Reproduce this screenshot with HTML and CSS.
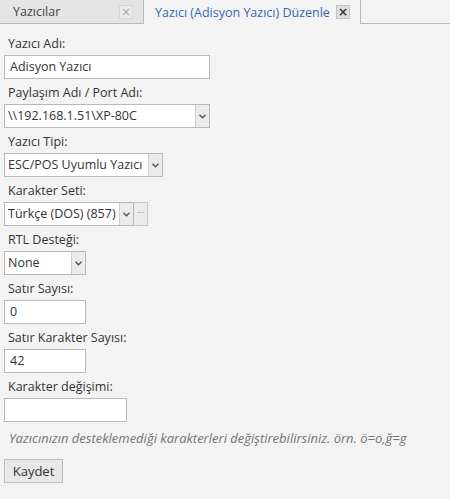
FILE: index.html
```html
<!DOCTYPE html>
<html lang="tr">
<head>
<meta charset="utf-8">
<link rel="stylesheet" href="styles.css">
</head>
<body>
<div class="tabs">
  <div class="tab">
    <span class="tab-title">Yazıcılar</span>
    <span class="close close-inactive">×</span>
  </div>
  <div class="tab active">
    <span class="tab-title">Yazıcı (Adisyon Yazıcı) Düzenle</span>
    <span class="close close-active">×</span>
  </div>
  <div class="tab-rest"></div>
</div>
<form class="form">
  <div class="field">
    <label class="label">Yazıcı Adı:</label>
    <div class="input w210">Adisyon Yazıcı</div>
  </div>
  <div class="field">
    <label class="label">Paylaşım Adı / Port Adı:</label>
    <div class="select w210"><span class="value">\\192.168.1.51\XP-80C</span><span class="arrow"><svg width="7" height="5" viewBox="0 0 7 5"><path d="M0.5 0.8 L3.5 3.8 L6.5 0.8" fill="none" stroke="#555" stroke-width="1.4"/></svg></span></div>
  </div>
  <div class="field">
    <label class="label">Yazıcı Tipi:</label>
    <div class="select w163"><span class="value">ESC/POS Uyumlu Yazıcı</span><span class="arrow"><svg width="7" height="5" viewBox="0 0 7 5"><path d="M0.5 0.8 L3.5 3.8 L6.5 0.8" fill="none" stroke="#555" stroke-width="1.4"/></svg></span></div>
  </div>
  <div class="field">
    <label class="label">Karakter Seti:</label>
    <div class="row">
      <div class="select w134"><span class="value">Türkçe (DOS) (857)</span><span class="arrow"><svg width="7" height="5" viewBox="0 0 7 5"><path d="M0.5 0.8 L3.5 3.8 L6.5 0.8" fill="none" stroke="#555" stroke-width="1.4"/></svg></span></div>
      <span class="more">···</span>
    </div>
  </div>
  <div class="field">
    <label class="label">RTL Desteği:</label>
    <div class="select w86"><span class="value">None</span><span class="arrow"><svg width="7" height="5" viewBox="0 0 7 5"><path d="M0.5 0.8 L3.5 3.8 L6.5 0.8" fill="none" stroke="#555" stroke-width="1.4"/></svg></span></div>
  </div>
  <div class="field">
    <label class="label">Satır Sayısı:</label>
    <div class="input w86">0</div>
  </div>
  <div class="field">
    <label class="label">Satır Karakter Sayısı:</label>
    <div class="input w86">42</div>
  </div>
  <div class="field">
    <label class="label">Karakter değişimi:</label>
    <div class="input w127"></div>
  </div>
  <p class="hint">Yazıcınızın desteklemediği karakterleri değiştirebilirsiniz. örn. ö=o,ğ=g</p>
  <button type="button" class="btn">Kaydet</button>
</form>
</body>
</html>
```
FILE: styles.css
```css
html, body {
  margin: 0;
  padding: 0;
  background: #f3f3f3;
  font-family: "Open Sans", "Noto Sans", sans-serif;
  font-size: 12.5px;
  color: #333;
}
.tabs {
  display: flex;
  height: 24px;
}
.tab {
  display: flex;
  align-items: center;
  box-sizing: border-box;
  height: 24px;
  border-bottom: 1px solid #b9b9b9;
}
.tab:first-child {
  width: 144px;
  background: #e4e4e4;
  border-right: 1px solid #b9b9b9;
  padding-left: 13px;
  color: #444;
}
.tab.active {
  width: 217px;
  border-bottom: none;
  border-right: 1px solid #b9b9b9;
  padding-left: 11px;
  color: #3568b5;
}
.tab-title {
  flex: 1;
  white-space: nowrap;
}
.tab-rest {
  flex: 1;
  border-bottom: 1px solid #b9b9b9;
}
.close {
  box-sizing: border-box;
  width: 14px;
  height: 14px;
  margin-right: 10px;
  display: flex;
  align-items: center;
  justify-content: center;
  font-size: 12px;
  line-height: 1;
  font-family: "DejaVu Sans", sans-serif;
}
.close-inactive {
  background: #ececec;
  border: 1px solid #d6d6d6;
  color: #aaa;
}
.close-active {
  background: #dcdcdc;
  border: 1px solid #c2c2c2;
  color: #333;
  font-weight: bold;
}
.form {
  padding: 11px 0 0 4px;
}
.field {
  margin-bottom: 5px;
}
.label {
  display: block;
  height: 18px;
  line-height: 18px;
  padding-left: 4px;
  margin-bottom: 2px;
  color: #333;
}
.input, .select {
  box-sizing: border-box;
  height: 24px;
  background: #fff;
  border: 1px solid #b8b8b8;
  line-height: 22px;
  padding-left: 5px;
  color: #333;
}
.select {
  display: flex;
  padding-left: 3px;
}
.value {
  flex: 1;
  white-space: nowrap;
  overflow: hidden;
}
.arrow {
  width: 13px;
  background: #ebebeb;
  border-left: 1px solid #cfcfcf;
  display: flex;
  align-items: center;
  justify-content: center;
}
.row {
  display: flex;
}
.more {
  box-sizing: border-box;
  width: 14px;
  height: 24px;
  background: #ebebeb;
  border: 1px solid #c8c8c8;
  border-left: none;
  color: #888;
  font-size: 9px;
  line-height: 20px;
  text-align: center;
}
.w210 { width: 206px; }
.w163 { width: 159px; }
.w134 { width: 130px; }
.w86 { width: 82px; }
.w127 { width: 123px; }
.hint {
  margin: 7px 0 0 5px;
  height: 18px;
  line-height: 18px;
  font-size: 13px;
  font-style: italic;
  color: #737373;
}
.btn {
  margin-top: 12px;
  width: 59px;
  height: 24px;
  border: 1px solid #bdbdbd;
  background: #e8e8e8;
  font-family: inherit;
  font-size: 13px;
  color: #333;
  padding: 0;
}
```
